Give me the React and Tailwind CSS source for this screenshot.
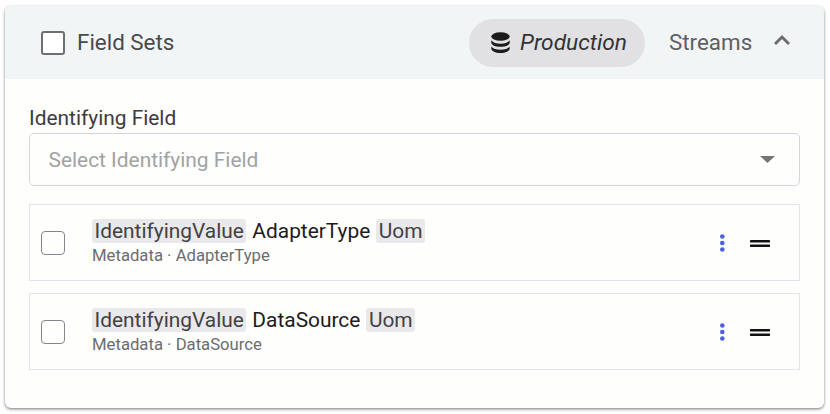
const FIELDS = ["AdapterType", "DataSource"];

function Database() {
  return (
    <svg className="mt-px h-[22px] w-[19px]" viewBox="0 0 19 22" fill="#1b1b1b">
      <ellipse cx="9.5" cy="4.500" rx="9.200" ry="4.300" />
      <path d="M.3 8.300c1.700 2.500 5 3.400 9.200 3.400s7.500-.9 9.200-3.400v2.100c0 2.600-4.100 4.300-9.200 4.300s-9.200-1.700-9.200-4.300z" />
      <path d="M.3 14.500c1.700 2.400 5 3.300 9.200 3.300s7.500-.9 9.200-3.300v2c0 2.600-4.100 4.600-9.200 4.600s-9.200-2-9.200-4.600z" />
    </svg>
  );
}

function Tag({ children }) {
  return (
    <span className="h-6 rounded-[3px] bg-[#e9e9eb] px-[2.500px] text-[#424244]">{children}</span>
  );
}

function FieldRow({ name }) {
  return (
    <div className="flex h-[77px] items-center border border-[#e3e4ec] pl-[11px] pr-[29px]">
      <span className="size-6 rounded-[4px] border border-[#85858d]" />
      <div className="ml-[27px] flex-1 whitespace-nowrap">
        <div className="flex gap-[6px] text-[20.9px] leading-6 text-[#1c1c1e]">
          <Tag>IdentifyingValue</Tag>
          <span>{name}</span>
          <Tag>Uom</Tag>
        </div>
        <div className="h-6 text-[16.7px] leading-[25px] text-[#6c6c70]">Metadata · {name}</div>
      </div>
      <svg className="h-5 w-[6px]" viewBox="0 0 6 20" fill="#4c5fe0">
        <circle cx="3.300" cy="3.500" r="2.300" />
        <circle cx="3.300" cy="10" r="2.300" />
        <circle cx="3.300" cy="16.500" r="2.300" />
      </svg>
      <svg className="ml-[25px] h-5 w-5" viewBox="0 0 20 20" fill="#111">
        <rect y="7" width="20" height="2.500" rx=".4" />
        <rect y="11.400" width="20" height="2.500" rx=".4" />
      </svg>
    </div>
  );
}

export default function App() {
  return (
    <div className="h-[414px] w-[830px] bg-[#fefefe] pl-[5px] pt-[6px] font-['Roboto',sans-serif]">
      <div className="h-[402px] w-[819px] overflow-hidden rounded-[6px] bg-[#fefefd] shadow-[0_1px_3px_rgba(0,0,0,0.4),0_2px_3px_rgba(0,0,0,0.12)]">
        <header className="flex h-[73px] items-center whitespace-nowrap bg-[#f1f5f5] pl-9 pr-[34px] text-[22.4px]">
          <span className="size-6 rounded-[3px] border-2 border-[#6f6f6f] bg-white" />
          <span className="ml-3 flex-1 text-[#4a4a4a]">Field Sets</span>
          <div className="flex h-12 w-[176px] items-center rounded-full bg-[#e1e1e3] pl-[22px]">
            <Database />
            <span className="ml-[10px] pt-[2px] text-[22.7px] italic text-[#333]">Production</span>
          </div>
          <span className="ml-6 w-[83px] text-[#606060]">Streams</span>
          <svg className="mb-[6px] ml-[22px] h-3 w-4" viewBox="0 0 16 12" fill="none" stroke="#6c6c6c" strokeWidth="2.900">
            <path d="M1 10l7-7 7 7" />
          </svg>
        </header>
        <div className="px-6 pt-[27px]">
          <div className="h-[27px] text-[20.9px] leading-6 text-[#3c3c3e]">Identifying Field</div>
          <div className="flex h-[53px] items-center justify-between rounded-[5px] border border-[#d2d5e0] pl-[18.500px] pr-[24px] text-[20.9px] text-[#a2a2a4]">
            <span className="pt-[2px]">Select Identifying Field</span>
            <svg className="h-[7px] w-[15px]" viewBox="0 0 15 7" fill="#757575"><path d="M0 0h15L7.500 7z" /></svg>
          </div>
          <div className="mt-[18px] flex flex-col gap-3">
            {FIELDS.map((name) => <FieldRow key={name} name={name} />)}
          </div>
        </div>
      </div>
    </div>
  );
}
